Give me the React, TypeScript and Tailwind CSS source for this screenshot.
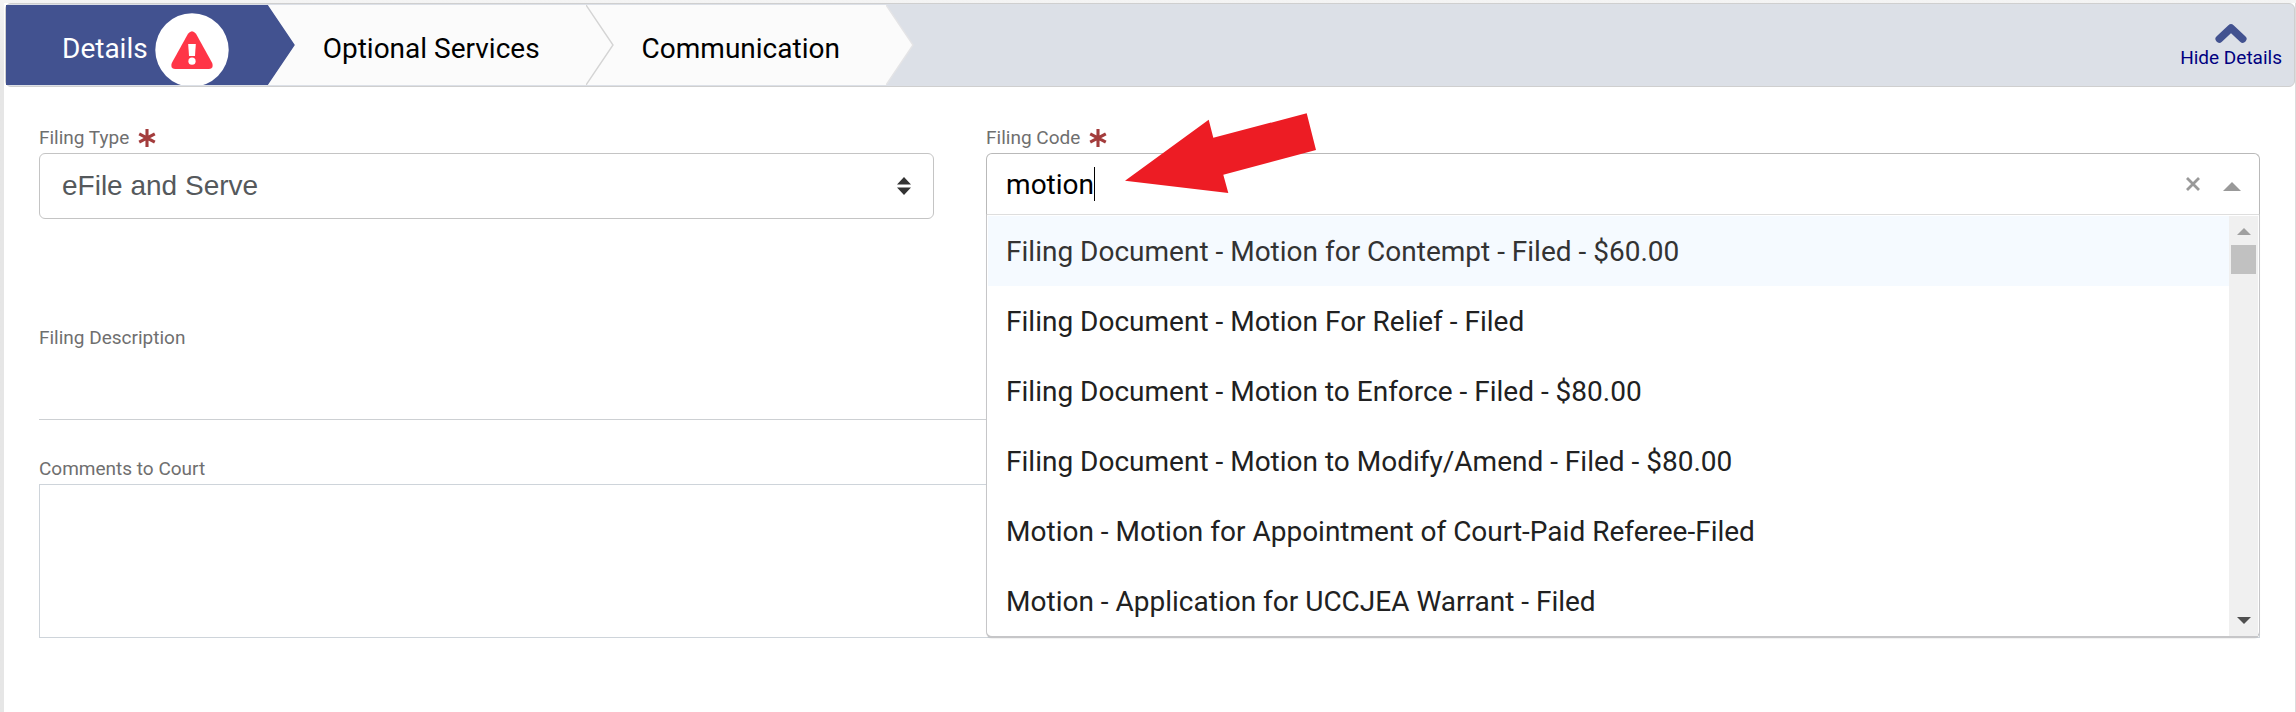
import { useState } from "react";

const filingCodes = [
  "Filing Document - Motion for Contempt - Filed - $60.00",
  "Filing Document - Motion For Relief - Filed",
  "Filing Document - Motion to Enforce - Filed - $80.00",
  "Filing Document - Motion to Modify/Amend - Filed - $80.00",
  "Motion - Motion for Appointment of Court-Paid Referee-Filed",
  "Motion - Application for UCCJEA Warrant - Filed",
];

function StepPoint({ fill, stroke }: { fill: string; stroke: string }) {
  return (
    <svg
      className="pointer-events-none absolute top-0 left-full h-20 w-7"
      viewBox="0 0 28 80"
      aria-hidden="true"
    >
      <path d="M-1 0H0L27 40L0 80H-1Z" fill={fill} />
      <path d="M0 0L27 40L0 80" fill="none" stroke={stroke} strokeWidth="1.4" />
    </svg>
  );
}

function WarningBadge() {
  return (
    <svg className="ml-[7px] h-[74px] w-[74px] shrink-0" viewBox="0 0 74 74" aria-hidden="true">
      <circle cx="37" cy="37" r="36.7" fill="#fff" />
      <path
        d="M33 20.8Q37 15.5 41 20.8L57.2 50Q59.2 55.6 54 56H20Q14.8 55.6 16.8 50Z"
        fill="#ff3547"
      />
      <path d="M33.2 31H40.8L40 43H34Z" fill="#fff" />
      <circle cx="37" cy="48.2" r="3.6" fill="#fff" />
    </svg>
  );
}

function Required() {
  return (
    <svg className="ml-[9px] h-[18px] w-[18px]" viewBox="0 0 18 18" role="img" aria-label="required">
      <path d="M9 0V18M1.2 4.8L16.8 13.2M16.8 4.8L1.2 13.2" stroke="#a33c3c" strokeWidth="3.1" />
    </svg>
  );
}

function CalloutArrow() {
  return (
    <svg
      className="pointer-events-none absolute -top-10 left-[139px] z-30 h-20 w-48"
      viewBox="0 0 192 80"
      aria-hidden="true"
    >
      <polygon points="0,67.7 83.7,6.7 88.3,24.7 181.7,0.3 191,37 98.3,61.7 103.3,80" fill="#ed1c24" />
    </svg>
  );
}

const labelClass = "flex h-6 items-center text-[19px] leading-6 text-[#6f6f6f]";

export default function App() {
  const [query, setQuery] = useState("motion");

  return (
    <div className="min-h-screen bg-[#f1f1f1] bg-linear-to-b from-[#f4f4f4] to-[#e6e6e6] to-10% pt-[3px] pl-1 font-['Roboto',sans-serif]">
      <main className="min-h-[calc(100vh-3px)] border-r border-[#dcdcdc] bg-white">
        <header className="ml-px flex items-stretch justify-between rounded-md border border-[#cfcfcf] bg-[#dce0e7] py-px">
          <nav className="flex h-20 text-[28px] leading-9">
            <button type="button" className="relative z-20 flex items-start bg-[#425290] pr-[38px] pl-14 text-white">
              <span className="flex h-20 items-start overflow-hidden pt-2">
                <span className="mt-[18px]">Details</span>
                <WarningBadge />
              </span>
              <StepPoint fill="#425290" stroke="#425290" />
            </button>
            <button type="button" className="relative z-10 flex items-center bg-[#fbfbfb] pt-2 pr-[46px] pl-14 text-black">
              Optional Services
              <StepPoint fill="#fbfbfb" stroke="#d4d4d4" />
            </button>
            <button type="button" className="relative flex items-center bg-[#fbfbfb] pt-2 pr-[46px] pl-14 text-black">
              Communication
              <StepPoint fill="#fbfbfb" stroke="#e4e4e6" />
            </button>
          </nav>
          <button type="button" className="mr-3 flex flex-col items-center pt-[18px] text-[19px] leading-6 text-[#000080]">
            <svg className="mb-[3px] h-5 w-8" viewBox="0 0 32 20" aria-hidden="true">
              <path d="M4.3 15.9L16 4.9L27.700 15.9" fill="none" stroke="#425290" strokeWidth="7.6" strokeLinecap="round" strokeLinejoin="round" />
            </svg>
            Hide Details
          </button>
        </header>

        <form className="pt-[39px] pr-[35px] pl-[35px]" onSubmit={(e) => e.preventDefault()}>
          <div className="grid grid-cols-12 gap-x-[52px]">
            <div className="col-span-5">
              <label htmlFor="filing-type" className={labelClass}>
                Filing Type
                <Required />
              </label>
              <div className="relative mt-[3px]">
                <select
                  id="filing-type"
                  className="h-[66px] w-full appearance-none rounded-md border border-[#c4c4c4] bg-white px-[22px] font-['Liberation_Sans',Arial,sans-serif] text-[28px] text-[#55595c] outline-none"
                >
                  <option>eFile and Serve</option>
                </select>
                <svg className="pointer-events-none absolute top-6 right-[23px] h-[18px] w-[14px]" viewBox="0 0 14 18" aria-hidden="true">
                  <path d="M0 7.5L7 0L14 7.5ZM0 10.5L7 18L14 10.5Z" fill="#333" />
                </svg>
              </div>
            </div>

            <div className="col-span-7">
              <label htmlFor="filing-code" className={labelClass}>
                Filing Code
                <Required />
              </label>
              <div className="relative z-20 mt-[3px]">
                <CalloutArrow />
                <div className="flex h-[62px] items-center rounded-t-md border border-[#b9b9b9] border-b-[#dedede] pr-[18px] pl-[19px]">
                  <input
                    id="filing-code"
                    type="text"
                    role="combobox"
                    aria-expanded="true"
                    aria-controls="filing-code-list"
                    value={query}
                    onChange={(e) => setQuery(e.target.value)}
                    className="field-sizing-content pt-[2px] text-[28px] leading-9 text-black caret-transparent outline-none"
                  />
                  <span className="h-[34px] w-px bg-black" />
                  <button type="button" aria-label="Clear" className="ml-auto">
                    <svg className="h-[14px] w-[14px]" viewBox="0 0 14 14" aria-hidden="true">
                      <path d="M1 1L13 13M13 1L1 13" stroke="#999" strokeWidth="2.8" />
                    </svg>
                  </button>
                  <button type="button" aria-label="Close list" className="ml-[23px] pt-1">
                    <svg className="h-[9px] w-[18px]" viewBox="0 0 18 9" aria-hidden="true">
                      <path d="M0 9L9 0L18 9Z" fill="#999" />
                    </svg>
                  </button>
                </div>
                <div className="absolute inset-x-0 top-full flex rounded-b-md border-x border-b-2 border-[#c6c6c8] bg-white px-px pt-px shadow-[0_1px_1px_rgba(0,0,0,0.06)]">
                  <ul id="filing-code-list" role="listbox" aria-label="Filing codes" className="flex-1">
                    {filingCodes.map((code, i) => (
                      <li
                        key={code}
                        role="option"
                        aria-selected={i === 0}
                        className={
                          i === 0
                            ? "flex h-[70px] items-center bg-[#f5faff] pt-[2px] pl-[18px] text-[28px] leading-9 text-[#333]"
                            : "flex h-[70px] items-center pt-[2px] pl-[18px] text-[28px] leading-9 text-[#212121]"
                        }
                      >
                        {code}
                      </li>
                    ))}
                  </ul>
                  <div className="flex w-[29px] flex-col items-center bg-[#f0f0f0] pt-3 pb-3" aria-hidden="true">
                    <svg className="h-[7px] w-[14px]" viewBox="0 0 14 7">
                      <path d="M0 7L7 0L14 7Z" fill="#a0a0a0" />
                    </svg>
                    <div className="mt-[10px] h-[29px] w-[25px] bg-[#c1c1c1]" />
                    <svg className="mt-auto h-[7px] w-[14px]" viewBox="0 0 14 7">
                      <path d="M0 0L7 7L14 0Z" fill="#505050" />
                    </svg>
                  </div>
                </div>
              </div>
            </div>
          </div>

          <div className="mt-[107px]">
            <label htmlFor="filing-description" className={labelClass}>
              Filing Description
            </label>
            <input
              id="filing-description"
              type="text"
              className="block h-[70px] w-full border-b border-[#cdd0d3] text-[28px] outline-none"
            />
          </div>

          <div className="mt-[37px]">
            <label htmlFor="comments" className={labelClass}>
              Comments to Court
            </label>
            <textarea
              id="comments"
              className="mt-[3px] block h-[154px] w-full resize-none border border-[#ced4da] p-4 text-[28px] outline-none"
            />
          </div>
        </form>
      </main>
    </div>
  );
}
